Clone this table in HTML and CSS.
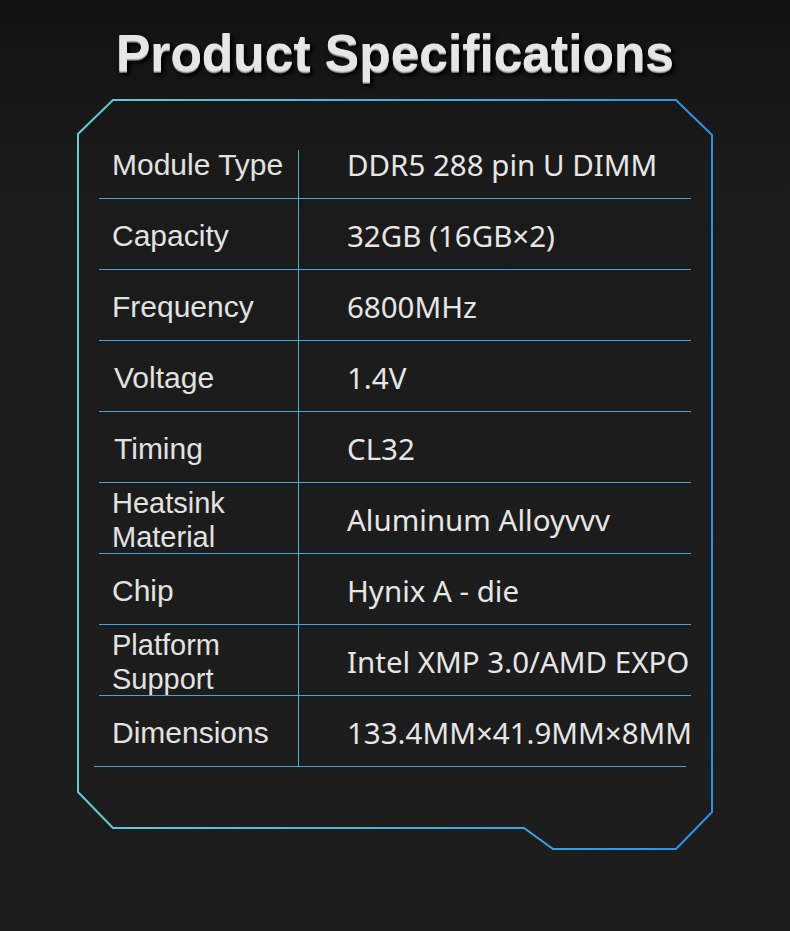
FILE: index.html
```html
<!DOCTYPE html>
<html lang="en">
<head>
<meta charset="utf-8">
<title>Product Specifications</title>
<link rel="stylesheet" href="styles.css">
</head>
<body>
<div class="page">
  <h1 class="title">Product Specifications</h1>
  <div class="frame">
    <svg class="frame-outline" width="637" height="751" viewBox="0 0 637 751" aria-hidden="true">
      <defs>
        <linearGradient id="fg" x1="0" y1="0" x2="1" y2="0">
          <stop offset="0" stop-color="#66ccd2"/>
          <stop offset="0.45" stop-color="#4fb2dc"/>
          <stop offset="1" stop-color="#2f8fe4"/>
        </linearGradient>
      </defs>
      <polygon points="1,35 36,1 599,1 635,36 635,713 599,750 476,750 447,729 36,729 1,693" fill="none" stroke="url(#fg)" stroke-width="2"/>
    </svg>
    <div class="spec-table">
      <div class="row"><div class="label">Module Type</div><div class="value">DDR5 288 pin U DIMM</div></div>
      <div class="row"><div class="label">Capacity</div><div class="value">32GB (16GB×2)</div></div>
      <div class="row"><div class="label">Frequency</div><div class="value">6800MHz</div></div>
      <div class="row"><div class="label shift">Voltage</div><div class="value">1.4V</div></div>
      <div class="row"><div class="label shift">Timing</div><div class="value">CL32</div></div>
      <div class="row"><div class="label two">Heatsink<br>Material</div><div class="value">Aluminum Alloyvvv</div></div>
      <div class="row"><div class="label">Chip</div><div class="value">Hynix A - die</div></div>
      <div class="row"><div class="label two">Platform<br>Support</div><div class="value">Intel XMP 3.0/AMD EXPO</div></div>
      <div class="row last"><div class="label">Dimensions</div><div class="value">133.4MM×41.9MM×8MM</div></div>
    </div>
  </div>
</div>
</body>
</html>
```
FILE: styles.css
```css
html, body {
  margin: 0;
  padding: 0;
}
body {
  width: 790px;
  height: 931px;
  overflow: hidden;
  background: linear-gradient(to bottom, #121212 0px, #1a1a1a 160px, #1c1c1c 400px, #1d1d1d 931px);
}
.page {
  display: flex;
  flex-direction: column;
  align-items: flex-start;
}
.title {
  margin: 0;
  padding-top: 23px;
  width: 790px;
  height: 60px;
  box-sizing: content-box;
  text-align: center;
  font-family: "Liberation Sans", Arial, sans-serif;
  font-weight: bold;
  font-size: 51.5px;
  line-height: 60px;
  color: #e6e6e6;
  text-shadow: 0 1px 0 #b5b5b5, 0 2px 0 #707070, 2px 3px 3px #000, 3px 4px 5px rgba(0,0,0,0.8);
}
.frame {
  position: relative;
  margin-top: 16px;
  margin-left: 77px;
  width: 637px;
  height: 751px;
}
.frame-outline {
  position: absolute;
  left: 0;
  top: 0;
  display: block;
}
.spec-table {
  position: relative;
  margin-left: 22px;
  padding-top: 29px;
  width: 592px;
  display: flex;
  flex-direction: column;
}
.spec-table::before {
  content: "";
  position: absolute;
  left: 199px;
  top: 51px;
  bottom: 0;
  width: 1px;
  background: #4aaedc;
}
.row {
  display: grid;
  grid-template-columns: 199px 1fr;
  height: 71px;
  box-sizing: border-box;
  align-items: center;
  padding-top: 3px;
  border-bottom: 1px solid #45a6df;
}
.row.last {
  border-bottom: 0;
  padding-bottom: 1px;
  position: relative;
}
.row.last::after {
  content: "";
  position: absolute;
  left: -5px;
  width: 592px;
  bottom: 0;
  height: 1px;
  background: #45a6df;
}
.label {
  padding-left: 13px;
  font-family: "Liberation Sans", Arial, sans-serif;
  font-size: 30px;
  line-height: 34px;
  color: #e2e2e2;
}
.label.shift {
  padding-left: 15px;
}
.label.two {
  font-size: 29px;
  line-height: 34px;
}
.value {
  padding-left: 49px;
  font-family: "Noto Sans", "Open Sans", sans-serif;
  font-size: 29.5px;
  line-height: 34px;
  color: #e6e6e6;
  white-space: nowrap;
}
```
